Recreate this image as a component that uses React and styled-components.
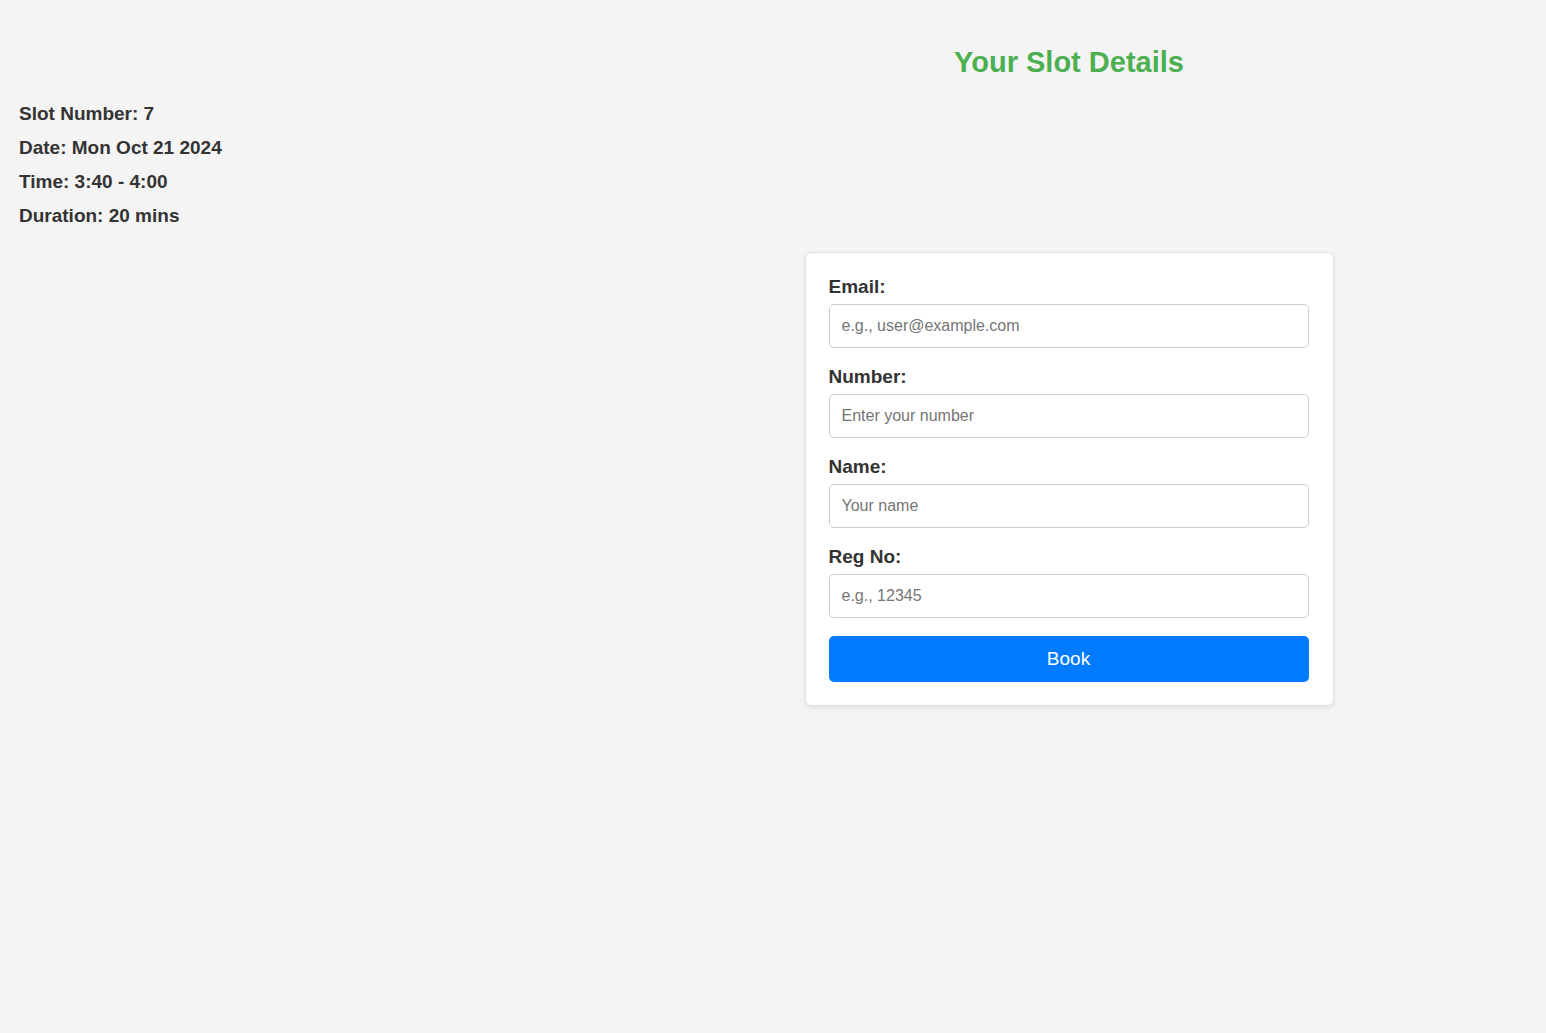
import React from "react";
import styled, { createGlobalStyle } from "styled-components";

const Global = createGlobalStyle`
  html, body { margin: 0; padding: 0; background: #f4f4f4; }
  body { font-family: "Liberation Sans", Arial, sans-serif; color: #333; }
  * { box-sizing: border-box; }
`;

const Page = styled.div`
  display: grid;
  grid-template-columns: 592px 1fr;
  min-height: 1033px;
`;

const Details = styled.div`
  padding: 103px 0 0 19px;
  display: flex;
  flex-direction: column;
  gap: 12px;
`;

const DetailLine = styled.div`
  font-size: 19px;
  font-weight: bold;
  line-height: 22px;
  color: #333;
`;

const Right = styled.div`
  display: flex;
  flex-direction: column;
  align-items: center;
  padding-top: 46px;
`;

const Title = styled.h2`
  margin: 0;
  font-size: 29px;
  line-height: 32px;
  color: #4caf50;
  font-weight: bold;
`;

const Card = styled.form`
  margin-top: 174px;
  width: 529px;
  background: #fff;
  border: 1px solid #e2e2e2;
  border-radius: 6px;
  box-shadow: 0 2px 5px rgba(0, 0, 0, 0.08);
  padding: 23px 24px 23px 23px;
  display: flex;
  flex-direction: column;
`;

const Label = styled.label`
  display: block;
  font-size: 19px;
  font-weight: bold;
  line-height: 22px;
  margin-bottom: 6px;
  color: #333;
`;

const Input = styled.input`
  display: block;
  width: 100%;
  height: 44px;
  padding: 0 12px;
  margin-bottom: 18px;
  border: 1px solid #ccc;
  border-radius: 5px;
  font-family: "Liberation Sans", Arial, sans-serif;
  font-size: 16px;
  color: #333;
  background: #fff;
  &::placeholder { color: #757575; }
`;

const Button = styled.button`
  height: 46px;
  width: 100%;
  border: none;
  border-radius: 5px;
  background: #007bff;
  color: #fff;
  font-family: "Liberation Sans", Arial, sans-serif;
  font-size: 19px;
  cursor: pointer;
`;

const fields = [
  { label: "Email:", ph: "e.g., user@example.com", type: "email" },
  { label: "Number:", ph: "Enter your number", type: "text" },
  { label: "Name:", ph: "Your name", type: "text" },
  { label: "Reg No:", ph: "e.g., 12345", type: "text" },
];

export default function App() {
  return (
    <>
      <Global />
      <Page>
        <Details>
          <DetailLine>Slot Number: 7</DetailLine>
          <DetailLine>Date: Mon Oct 21 2024</DetailLine>
          <DetailLine>Time: 3:40 - 4:00</DetailLine>
          <DetailLine>Duration: 20 mins</DetailLine>
        </Details>
        <Right>
          <Title>Your Slot Details</Title>
          <Card onSubmit={(e) => e.preventDefault()}>
            {fields.map((f) => (
              <div key={f.label}>
                <Label>{f.label}</Label>
                <Input type={f.type} placeholder={f.ph} />
              </div>
            ))}
            <Button type="submit">Book</Button>
          </Card>
        </Right>
      </Page>
    </>
  );
}
